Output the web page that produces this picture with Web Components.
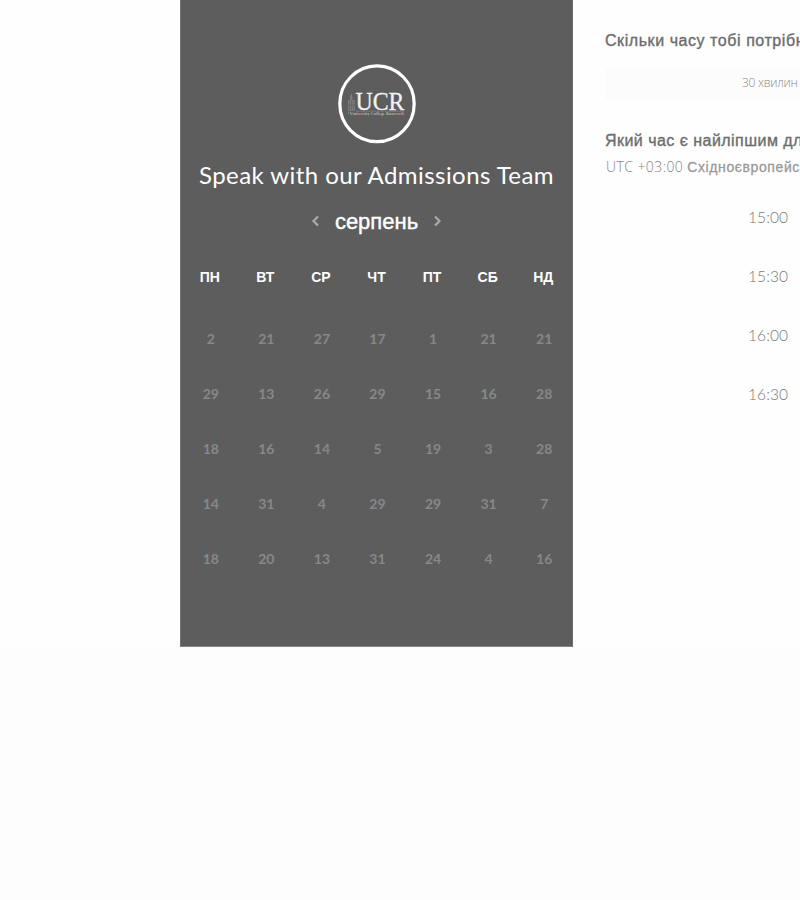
<!DOCTYPE html>
<html lang="uk"><head><meta charset="utf-8"><title>Speak with our Admissions Team</title>
<style>html,body{margin:0;height:100%;overflow:hidden;background:#fdfdfd}</style></head>
<body><meeting-page></meeting-page>
<script>
const define = (name, html, setup) => customElements.define(name, class extends HTMLElement {
  connectedCallback() {
    if (this.shadowRoot) return;
    const t = document.createElement('template');
    t.innerHTML = html;
    const root = this.attachShadow({mode: 'open'});
    root.append(t.content.cloneNode(true));
    if (setup) setup(root, this);
  }
});

define('college-logo', `<style>:host{display:block;width:80px;height:80px}svg{display:block}</style>
<svg width="80" height="80" viewBox="0 0 80 80">
<ellipse cx="40" cy="39.800" rx="37.2" ry="37.9" fill="none" stroke="#fff" stroke-width="3.2"/>
<g fill="#858585"><path d="M11 36h2v-3l1.200-4 1.200 4v3H18v11h-7z" opacity=".8"/></g>
<g fill="none" stroke="#626262" stroke-width=".7"><path d="M12.5 37v9M14.5 36v10M16.5 37v9M11 41h7"/></g>
<text x="18.500" y="45.5" font-family="Liberation Serif,serif" font-size="25" textLength="49" lengthAdjust="spacingAndGlyphs" fill="#f2f2f2" stroke="#f2f2f2" stroke-width=".3">UCR</text>
<path d="M11.500 47.5v3M19 47.2h48" stroke="#999" stroke-width=".5"/>
<text x="13" y="51.3" font-family="Liberation Serif,serif" font-size="4.2" font-weight="700" textLength="54" fill="#b4b4b4">University College Roosevelt</text>
</svg>`);

define('month-switcher', `<style>:host{display:flex;height:30px;align-items:center;justify-content:center;gap:15px;margin-top:16px}
span{font:22px/30px "Liberation Sans",sans-serif;color:#fff;-webkit-text-stroke:.4px #fff}
svg{display:block;margin-top:-2px;fill:none;stroke:#aaa;stroke-width:2.200}</style>
<svg width="9" height="12" viewBox="0 0 9 12"><path d="M7 1.5 2.5 6 7 10.5"/></svg><span><slot></slot></span>
<svg width="9" height="12" viewBox="0 0 9 12"><path d="M2 1.5 6.500 6 2 10.5"/></svg>`);

define('calendar-grid', `<style>:host{display:block;margin:22px 1px 0}
div{display:grid;grid-template-columns:repeat(7,1fr);text-align:center}
.h{font:700 14px/36px "Liberation Sans",sans-serif;color:#fff}
.d{margin-top:16px;grid-auto-rows:55px;font:700 14px/55px Lato,sans-serif;color:#888}
.d span{padding-left:2px}</style><div class="h"></div><div class="d"></div>`, root => {
  const fill = (sel, items) => root.querySelector(sel).append(...items.map(v => {
    const s = document.createElement('span'); s.textContent = v; return s;
  }));
  fill('.h', ['ПН','ВТ','СР','ЧТ','ПТ','СБ','НД']);
  fill('.d', [2,21,27,17,1,21,21, 29,13,26,29,15,16,28, 18,16,14,5,19,3,28, 14,31,4,29,29,31,7, 18,20,13,31,24,4,16]);
});

define('calendar-panel', `<style>:host{display:flex;flex-direction:column;box-sizing:border-box;width:393px;height:647px;padding-top:64px;background:#5d5d5d;border-left:1px solid #747474;border-right:1px solid #6c6c6c;border-bottom:1px solid #858585}
college-logo{align-self:center}h1{margin:15px 0 0;font:400 24px/32px Lato,sans-serif;color:#fff;text-align:center;white-space:nowrap;letter-spacing:.44px}</style>
<college-logo></college-logo><h1><slot></slot></h1><month-switcher>серпень</month-switcher><calendar-grid></calendar-grid>`);

define('time-option', `<style>:host{display:block;height:59px;padding-left:143px;font:300 15.500px/59px Lato,sans-serif;color:#777;letter-spacing:.1px}</style><slot></slot>`);

define('booking-options', `<style>:host{display:block;width:195px;overflow:hidden;white-space:nowrap;padding-top:29px}
h2{margin:0;font:400 16px/24px "Liberation Sans",sans-serif;color:#6c6c6c;-webkit-text-stroke:.35px #6c6c6c;letter-spacing:.46px}
h2:first-of-type{letter-spacing:.56px}
.duration{height:32px;margin:15px 0 29px;padding-left:137px;background:#fcfcfc;font:300 12px/30px "Open Sans",sans-serif;letter-spacing:-.25px;color:#888}
.zone{font:300 14px/28px "Open Sans",sans-serif;color:#858585;padding-left:1px;letter-spacing:.42px}
.zone b{font:400 14px/28px "Liberation Sans",sans-serif;color:#999;-webkit-text-stroke:.3px #999;letter-spacing:.6px}
.times{margin-top:7px}</style>
<h2>Скільки часу тобі потрібн</h2><div class="duration">30 хвилин</div>
<h2>Який час є найліпшим дл</h2><div class="zone">UTC +03:00 <b>Східноєвропейс</b></div>
<div class="times"><time-option>15:00</time-option><time-option>15:30</time-option><time-option>16:00</time-option><time-option>16:30</time-option></div>`);

define('meeting-page', `<style>:host{display:grid;grid-template-columns:393px 195px;column-gap:32px;width:620px;height:647px;padding-left:180px;background:#fefefe;overflow:hidden}</style>
<calendar-panel>Speak with our Admissions Team</calendar-panel><booking-options></booking-options>`);
</script></body></html>
